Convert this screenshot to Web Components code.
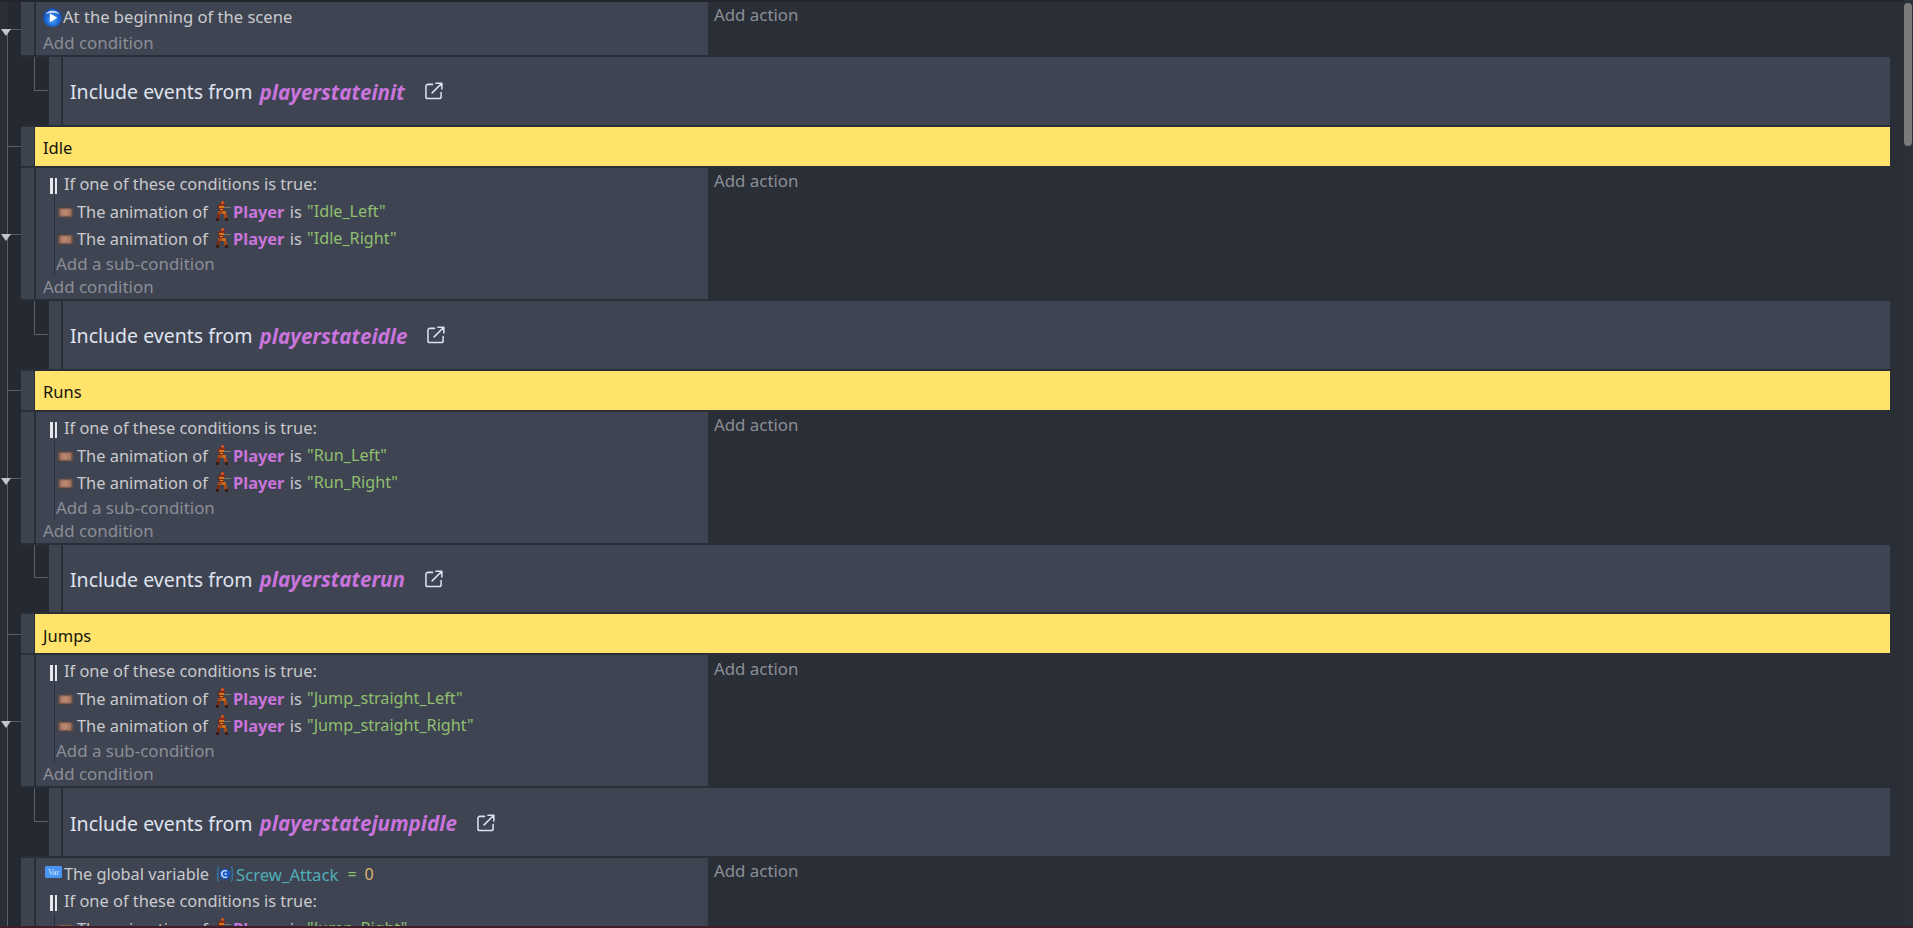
<!DOCTYPE html>
<html>
<head>
<meta charset="utf-8">
<title>Events</title>
<style>
  html, body { margin: 0; padding: 0; height: 100%; overflow: hidden; background: #2a2e37; }
  body { font-family: "Noto Sans", "Open Sans", sans-serif; }
</style>
</head>
<body>
<event-sheet>
  <standard-event toggle>
    <cond-line style="line-height:26px"><ev-icon kind="play"></ev-icon><span style="font-size:16.6px">At the beginning of the scene</span></cond-line>
    <add-line>Add condition</add-line>
  </standard-event>
  <link-event target="playerstateinit"></link-event>
  <comment-event>Idle</comment-event>
  <standard-event toggle>
    <or-group>
      <anim-cond value="Idle_Left"></anim-cond>
      <anim-cond value="Idle_Right"></anim-cond>
    </or-group>
    <add-line>Add condition</add-line>
  </standard-event>
  <link-event target="playerstateidle"></link-event>
  <comment-event>Runs</comment-event>
  <standard-event toggle>
    <or-group>
      <anim-cond value="Run_Left"></anim-cond>
      <anim-cond value="Run_Right"></anim-cond>
    </or-group>
    <add-line>Add condition</add-line>
  </standard-event>
  <link-event target="playerstaterun"></link-event>
  <comment-event>Jumps</comment-event>
  <standard-event toggle>
    <or-group>
      <anim-cond value="Jump_straight_Left"></anim-cond>
      <anim-cond value="Jump_straight_Right"></anim-cond>
    </or-group>
    <add-line>Add condition</add-line>
  </standard-event>
  <link-event target="playerstatejumpidle"></link-event>
  <standard-event>
    <cond-line style="line-height:29px"><ev-icon kind="var"></ev-icon><span style="font-size:16.3px;margin-right:7px">The global variable</span><ev-icon kind="global"></ev-icon><span style="color:#4fadb8;font-size:16.7px">Screw_Attack</span><span style="color:#8fbf6f;margin:0 8px 0 9px">=</span><span style="color:#dcb56f">0</span></cond-line>
    <or-group>
      <anim-cond value="Jump_Right"></anim-cond>
      <anim-cond value="Jump_Left"></anim-cond>
    </or-group>
    <add-line>Add condition</add-line>
  </standard-event>
</event-sheet>

<script>
  // Small helper so every element gets an open root with its own styles
  function defineEl(name, markup, setup) {
    class El extends HTMLElement {
      constructor() {
        super();
        this.attachShadow({ mode: 'open' });
      }
      connectedCallback() {
        this.shadowRoot.innerHTML = typeof markup === 'function' ? markup(this) : markup;
        if (setup) setup(this);
      }
    }
    customElements.define(name, El);
  }

  const ICONS = {
    play: `<svg width="19" height="19" viewBox="0 0 18 18" style="margin:4px 1px 0 -1px">
      <defs><radialGradient id="b" cx="50%" cy="60%" r="55%">
        <stop offset="0" stop-color="#58b0f8"/><stop offset=".6" stop-color="#1f6ad8"/><stop offset="1" stop-color="#1648a8"/>
      </radialGradient></defs>
      <circle cx="9" cy="9" r="9" fill="url(#b)"/>
      <path d="M2.2 6C4.5 1.2 13.5 1.2 15.8 6C12 4.2 6 4.2 2.2 6Z" fill="#d8e8fb" opacity=".85"/>
      <path d="M6.5 5L13.5 9.2L6.5 13.5Z" fill="#fff"/>
    </svg>`,
    anim: `<svg width="17" height="11" viewBox="0 0 17 11" style="margin:10px 3px 0 0">
      <rect width="17" height="11" rx="1.5" fill="#4d4648"/>
      <rect x="1.5" y="1" width="14" height="9" rx="2" fill="#7a5c52"/>
      <rect x="3" y="2" width="11" height="7" rx="2" fill="#a87862"/>
      <rect x="5" y="3" width="6" height="5" rx="2" fill="#b98670"/>
    </svg>`,
    player: `<svg width="16" height="20" viewBox="0 0 16 20" shape-rendering="crispEdges" style="margin:4px 2px 0 3px">
      <rect x="6" y="0" width="3" height="3" fill="#b8401c"/>
      <rect x="7" y="1" width="1" height="1" fill="#e8a030"/>
      <rect x="4" y="3" width="6" height="2" fill="#8c2c14"/>
      <rect x="4" y="5" width="5" height="2" fill="#d07820"/>
      <rect x="9" y="6" width="7" height="1" fill="#77776a"/>
      <rect x="3" y="4" width="1" height="4" fill="#6a2412"/>
      <rect x="4" y="7" width="5" height="3" fill="#7c2c14"/>
      <rect x="5" y="8" width="3" height="1" fill="#d89030"/>
      <rect x="3" y="10" width="4" height="3" fill="#a8481a"/>
      <rect x="7" y="10" width="4" height="3" fill="#c86c1c"/>
      <rect x="2" y="13" width="3" height="4" fill="#7c2c14"/>
      <rect x="9" y="13" width="3" height="4" fill="#a8481a"/>
      <rect x="1" y="17" width="3" height="3" fill="#3c1c10"/>
      <rect x="10" y="17" width="3" height="3" fill="#3c1c10"/>
    </svg>`,
    var: `<svg width="17" height="12" viewBox="0 0 17 12" style="margin:6px 2px 0 1px">
      <rect width="17" height="12" rx="1" fill="#4a94f4"/>
      <text x="8.5" y="9" text-anchor="middle" font-family="Liberation Serif, serif" font-size="8" fill="#d8e8ff">Var</text>
    </svg>`,
    global: `<svg width="18" height="18" viewBox="0 0 18 18" style="margin:5px 2px 0 0">
      <path d="M3 2C1 2 2 4 2 7C2 8 1.5 9 .7 9C1.5 9 2 10 2 11C2 14 1 16 3 16M15 2C17 2 16 4 16 7C16 8 16.5 9 17.3 9C16.5 9 16 10 16 11C16 14 17 16 15 16" fill="none" stroke="#2f8fd0" stroke-width="1"/>
      <circle cx="9" cy="9" r="5.5" fill="#1d58c0"/>
      <path d="M11 6.3A3.3 3.3 0 1 0 11 11.7" fill="none" stroke="#cfe4ff" stroke-width="1.3"/>
      <circle cx="9.6" cy="9" r="1" fill="#cfe4ff"/>
    </svg>`
  };

  defineEl('ev-icon', (el) => `
    <style>:host { display: block; flex: none; } svg { display: block; flex: none; }</style>
    ${ICONS[el.getAttribute('kind')]}`);

  defineEl('event-sheet', `
    <style>
      :host {
        display: flex; flex-direction: column; gap: 2px;
        height: 926px; padding-top: 2px; box-sizing: border-box; overflow: hidden;
        background:
          linear-gradient(#5a5f6a, #5a5f6a) 7px 30px / 1px 100% no-repeat,
          linear-gradient(#252932, #252932) 8px 0 / 13px 100% no-repeat,
          #2a2e37;
        position: relative;
        font-size: 16px;
        color: #c9cacd;
      }
      .top { position: absolute; left: 0; right: 0; top: 0; height: 2px; background: #22252c; }
      .track { position: absolute; right: 0; top: 0; bottom: 0; width: 9px; background: #2c3039; }
      .thumb { position: absolute; right: 1px; top: 3px; width: 8px; height: 143px; border-radius: 4px; background: #7b7b7b; }
    </style>
    <div class="top"></div>
    <slot></slot>
    <div class="track"><div class="thumb"></div></div>
    `);

  defineEl('standard-event', (el) => `
    <style>
      :host {
        display: grid; grid-template-columns: 21px 13px 674px 1fr;
        position: relative; flex: none; padding-right: 23px;
      }
      .handle { grid-column: 2; background: #3e4350; }
      .conds { grid-column: 3; margin-left: 2px; background: #3f4452; padding: 2px 0 0 7px; display: flex; flex-direction: column; min-width: 0; }
      .acts { grid-column: 4; padding: 1.4px 0 0 6px; height: 26px; line-height: 24px; color: #8b8e96; font-size: 16.85px; }
      .tri { position: absolute; left: 1px; top: calc(50% + 0.5px); border: solid transparent; border-width: 7px 5.5px 0; border-top-color: #c4c5c8; }
      .stub { position: absolute; left: 7px; top: calc(50% + 0.5px); width: 14px; height: 1px; background: #5a5f6a; }
    </style>
    ${el.hasAttribute('toggle') ? '<div class="stub"></div><div class="tri"></div>' : ''}
    <div class="handle"></div>
    <div class="conds"><slot></slot></div>
    <div class="acts">Add action</div>`);

  defineEl('cond-line', `
    <style>:host { display: flex; align-items: flex-start; height: 27px; line-height: 27px; white-space: nowrap; padding-left: 1px; }</style>
    <slot></slot>`);

  defineEl('add-line', `
    <style>:host { display: block; height: 24px; line-height: 24px; color: #8b8e96; white-space: nowrap; font-size: 16.9px; }</style>
    <slot></slot>`);

  defineEl('or-group', `
    <style>
      :host { display: block; }
      .head { display: flex; height: 27px; line-height: 28px; padding-left: 7px; white-space: nowrap; font-size: 16.4px; }
      .bars { width: 7px; height: 16px; margin: 8px 7px 0 0; border-left: 3px solid #e6e7ea; border-right: 2px solid #e6e7ea; box-sizing: border-box; }
      .subs { margin-left: 11px; border-left: 1px solid #2a2e37; padding-left: 1px; }
      .sub-add { height: 24px; line-height: 26px; color: #8b8e96; white-space: nowrap; font-size: 16.9px; }
    </style>
    <div class="head"><span class="bars"></span>If one of these conditions is true:</div>
    <div class="subs">
      <slot></slot>
      <div class="sub-add">Add a sub-condition</div>
    </div>`);

  defineEl('anim-cond', (el) => `
    <style>
      :host { display: flex; height: 27px; line-height: 29px; white-space: nowrap; padding-left: 1px; align-items: flex-start; font-size: 16.4px; }
      b { color: #c974dc; font-weight: 700; }
      .is { margin: 0 1px; }
      .s { color: #8fbf6f; font-size: 16.2px; }
    </style>
    <ev-icon kind="anim"></ev-icon>The animation of&nbsp;<ev-icon kind="player"></ev-icon><b>Player</b>&nbsp;<span class="is">is</span>&nbsp;<span class="s">"${el.getAttribute('value')}"</span>`);

  defineEl('link-event', (el) => `
    <style>
      :host { display: flex; height: 67.75px; flex: none; padding: 0 23px 0 49px; position: relative;
              background: linear-gradient(#252932, #252932) 21px 0 / 28px 100% no-repeat; }
      .elbow { position: absolute; left: 34px; top: 0; width: 14px; height: 50%; box-sizing: border-box; border-left: 1px solid #5a5f6a; border-bottom: 1px solid #5a5f6a; }
      .handle { width: 12px; background: #3e4350; flex: none; }
      .body { flex: 1; margin-left: 2px; background: #3f4452; display: flex; align-items: center; padding: 2px 0 0 7px; box-sizing: border-box;
              font-size: 19.5px; color: #dfe3ef; white-space: nowrap; }
      i { color: #c974dc; font-weight: 700; margin-left: 7px; font-size: 20.6px; }
      svg { margin-left: 20px; flex: none; margin-bottom: 1px; }
    </style>
    <div class="elbow"></div>
    <div class="handle"></div>
    <div class="body">Include events from <i>${el.getAttribute('target')}</i>
      <svg width="18" height="18" viewBox="0 0 19 19" fill="none" stroke="#dfe3ef" stroke-width="1.6" stroke-linecap="round" stroke-linejoin="round">
        <path d="M8 2.5H3A2 2 0 0 0 1 4.5V15.5A2 2 0 0 0 3 17.5H15A2 2 0 0 0 17 15.5V11"/>
        <path d="M7.5 11.5L17.5 1.5M11.5 1.2H17.8V7.5"/>
      </svg>
    </div>`);

  defineEl('comment-event', `
    <style>
      :host { display: grid; grid-template-columns: 21px 13px 1fr; height: 39px; flex: none; padding-right: 23px; position: relative; font-size: 16.5px; }
      .stub { position: absolute; left: 7px; top: 50%; width: 14px; height: 1px; background: #5a5f6a; }
      .handle { grid-column: 2; background: #3e4350; }
      .body { grid-column: 3; margin-left: 1px; background: #ffe36b; color: #14140c; display: flex; align-items: center; padding: 3px 0 0 8px; box-sizing: border-box; }
    </style>
    <div class="stub"></div>
    <div class="handle"></div>
    <div class="body"><slot></slot></div>`);

  defineEl('status-strip', `<style>:host { display: block; height: 2px; background: #421c28; }</style>`);
  document.body.appendChild(document.createElement('status-strip'));
</script>
</body>
</html>
